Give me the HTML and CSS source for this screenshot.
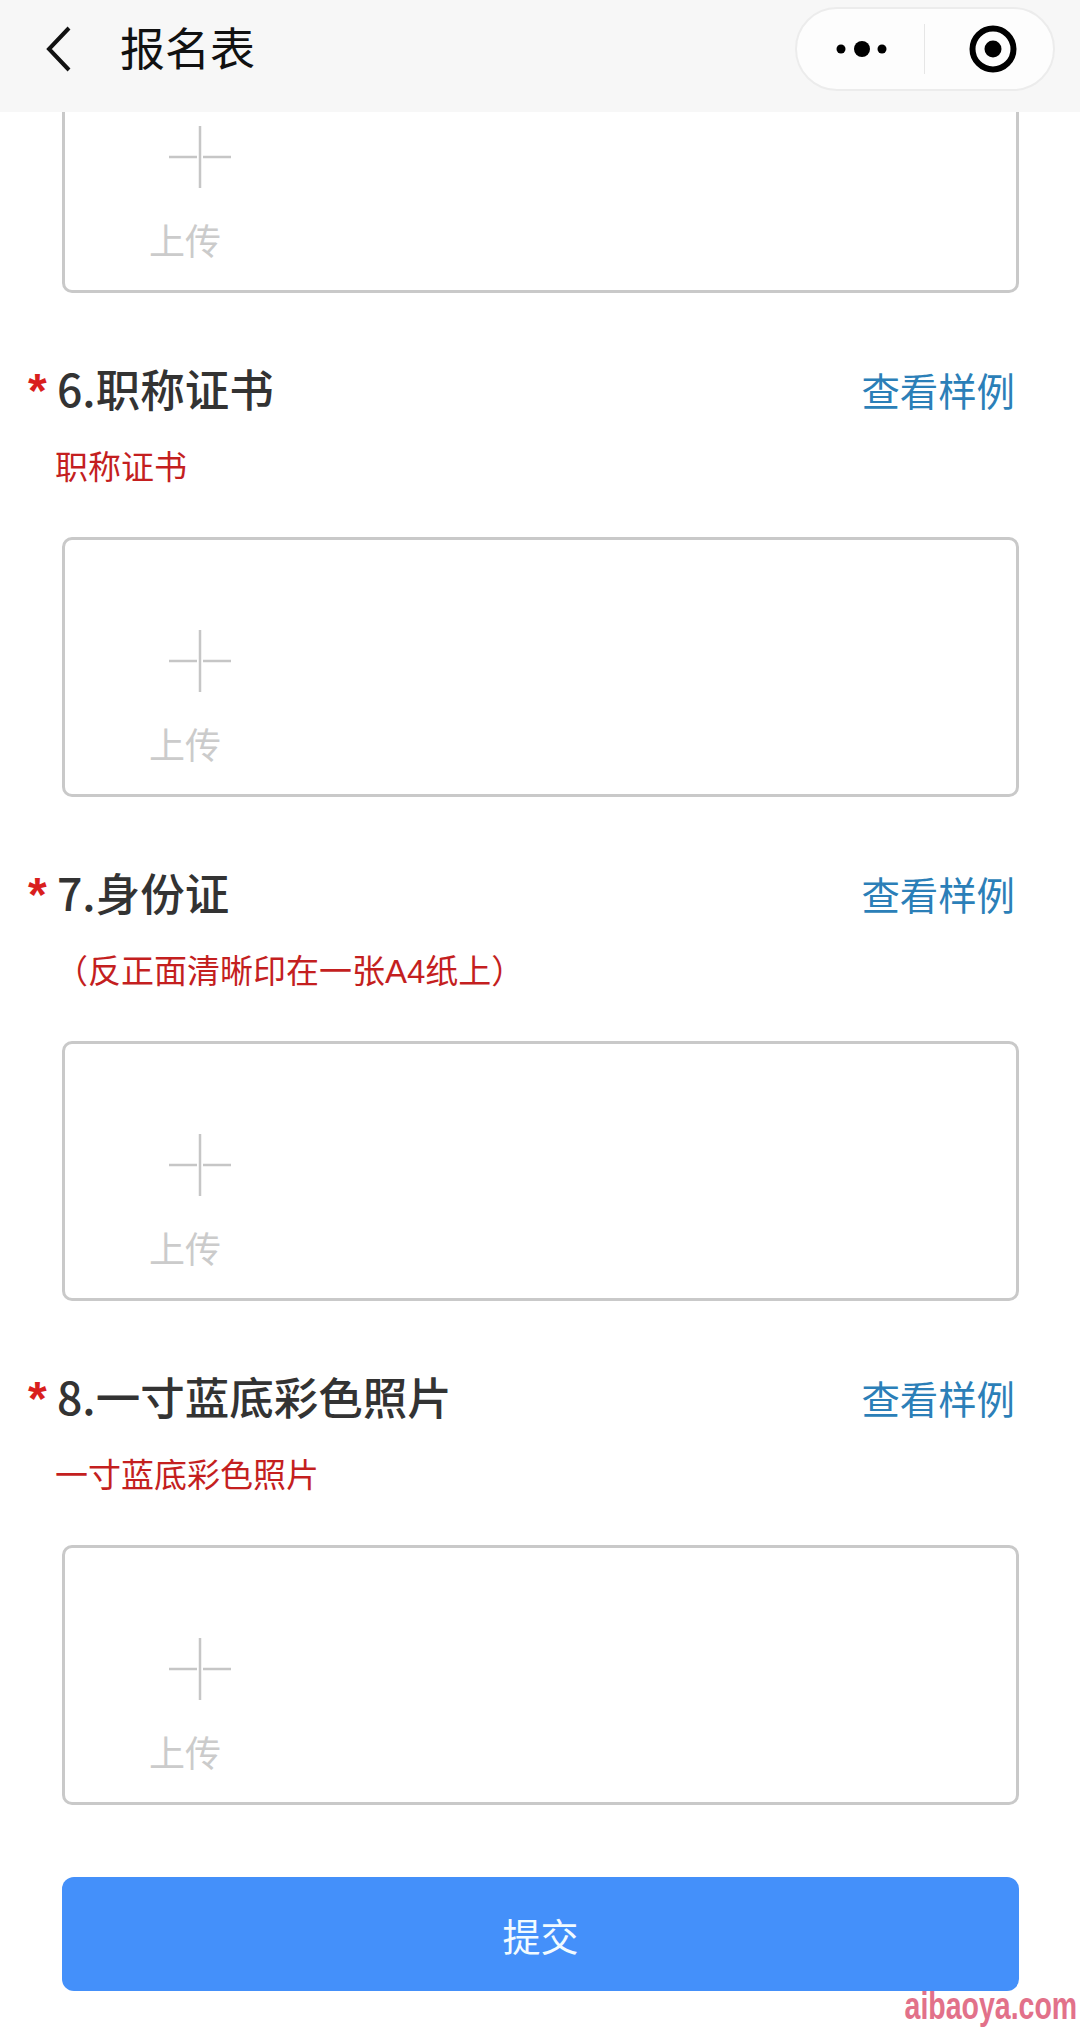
FILE: index.html
```html
<!DOCTYPE html>
<html lang="zh-CN">
<head>
  <meta charset="UTF-8" />
  <title>报名表</title>
  <link rel="stylesheet" href="styles.css">
</head>
<body>
  <header class="topbar">
    <svg class="back" width="30" height="46" viewBox="0 0 30 46"><path d="M26 2 L6 23 L26 44" fill="none" stroke="#111" stroke-width="4"/></svg>
    <h1>报名表</h1>
    <div class="capsule">
      <svg class="more" width="54" height="16" viewBox="0 0 54 16"><circle cx="6" cy="8" r="4.5"/><circle cx="27" cy="8" r="8"/><circle cx="47" cy="8" r="4.5"/></svg>
      <span class="sep"></span>
      <svg class="target" width="48" height="48" viewBox="0 0 48 48"><circle cx="24" cy="24" r="20.5" fill="none" stroke="#000" stroke-width="6"/><circle cx="24" cy="24" r="8.5"/></svg>
    </div>
  </header>

  <main>
    <div class="upload cut">
      <svg class="plus" width="62" height="62" viewBox="0 0 62 62"><path d="M0 31H28M34 31H62" stroke="#c6c6c6" stroke-width="2.5"/><path d="M31 0V62" stroke="#c6c6c6" stroke-width="2.5"/></svg>
      <span class="upload-text">上传</span>
    </div>

    <section class="item">
      <div class="item-head">
        <span class="star">*</span>
        <h2>6.职称证书</h2>
        <a class="sample">查看样例</a>
      </div>
      <p class="hint">职称证书</p>
      <div class="upload">
        <svg class="plus" width="62" height="62" viewBox="0 0 62 62"><path d="M0 31H28M34 31H62" stroke="#c6c6c6" stroke-width="2.5"/><path d="M31 0V62" stroke="#c6c6c6" stroke-width="2.5"/></svg>
        <span class="upload-text">上传</span>
      </div>
    </section>

    <section class="item">
      <div class="item-head">
        <span class="star">*</span>
        <h2>7.身份证</h2>
        <a class="sample">查看样例</a>
      </div>
      <p class="hint">（反正面清晰印在一张A4纸上）</p>
      <div class="upload">
        <svg class="plus" width="62" height="62" viewBox="0 0 62 62"><path d="M0 31H28M34 31H62" stroke="#c6c6c6" stroke-width="2.5"/><path d="M31 0V62" stroke="#c6c6c6" stroke-width="2.5"/></svg>
        <span class="upload-text">上传</span>
      </div>
    </section>

    <section class="item">
      <div class="item-head">
        <span class="star">*</span>
        <h2>8.一寸蓝底彩色照片</h2>
        <a class="sample">查看样例</a>
      </div>
      <p class="hint">一寸蓝底彩色照片</p>
      <div class="upload">
        <svg class="plus" width="62" height="62" viewBox="0 0 62 62"><path d="M0 31H28M34 31H62" stroke="#c6c6c6" stroke-width="2.5"/><path d="M31 0V62" stroke="#c6c6c6" stroke-width="2.5"/></svg>
        <span class="upload-text">上传</span>
      </div>
    </section>

    <button class="submit">提交</button>
  </main>

  <span class="watermark">aibaoya.com</span>
</body>
</html>
```

FILE: styles.css
```css
* {
  box-sizing: border-box;
}
body {
  font-family: "Liberation Sans", "Noto Sans CJK SC", sans-serif;
  margin: 0;
  width: 1080px;
  height: 2030px;
  overflow: hidden;
  background: #fff;
  color: #333;
  position: relative;
}
.topbar {
  height: 112px;
  background: #f7f7f7;
  display: flex;
  align-items: center;
  padding: 0 25px 14px 43px;
}
.topbar h1 {
  margin: 3px 0 0 47px;
  font-size: 45px;
  font-weight: 400;
  line-height: 50px;
  color: #111;
}
.capsule {
  margin-left: auto;
  width: 260px;
  height: 84px;
  background: #fdfdfd;
  border: 2px solid #ececec;
  border-radius: 42px;
  display: flex;
  align-items: center;
  padding-left: 38px;
}
.sep {
  width: 1px;
  height: 50px;
  background: #e6e6e6;
  margin-left: 35px;
}
.target {
  margin-left: 44px;
}
main {
  padding: 0 61px 0 62px;
}
.upload {
  height: 260px;
  border: 3px solid #c9c9c9;
  border-radius: 10px;
  display: flex;
  flex-direction: column;
  justify-content: flex-end;
  padding: 0 0 27px 84px;
}
.upload.cut {
  height: 181px;
  border-top: 0;
  border-radius: 0 0 10px 10px;
}
.plus {
  margin: 0 0 35px 20px;
}
.upload-text {
  font-size: 36px;
  line-height: 40px;
  color: #cbcbcb;
}
.item {
  margin-top: 70px;
}
.item-head {
  display: flex;
  align-items: center;
  height: 56px;
  margin-left: -34px;
  margin-right: 4px;
}
.star {
  width: 29px;
  font-size: 48px;
  font-weight: 700;
  color: #d91e1e;
  line-height: 56px;
}
.item-head h2 {
  margin: 0 0 7px;
  font-family: "Noto Sans CJK SC", sans-serif;
  font-size: 44.5px;
  font-weight: 500;
  line-height: 56px;
  color: #333;
}
.sample {
  margin: 4px 0 0 auto;
  font-size: 38.4px;
  line-height: 50px;
  color: #2b7fb8;
}
.hint {
  margin: 29px 0 49px -7px;
  font-size: 33px;
  line-height: 40px;
  color: #c41f1f;
}
.submit {
  display: block;
  width: 100%;
  height: 114px;
  margin-top: 72px;
  border: none;
  border-radius: 12px;
  background: #4490fa;
  color: #f2fbff;
  font: inherit;
  font-size: 38px;
}
.watermark {
  position: absolute;
  right: 3px;
  bottom: 4px;
  font-size: 38px;
  font-weight: 700;
  line-height: 40px;
  color: #e2718a;
  transform: scaleX(0.75);
  transform-origin: right center;
}
```
